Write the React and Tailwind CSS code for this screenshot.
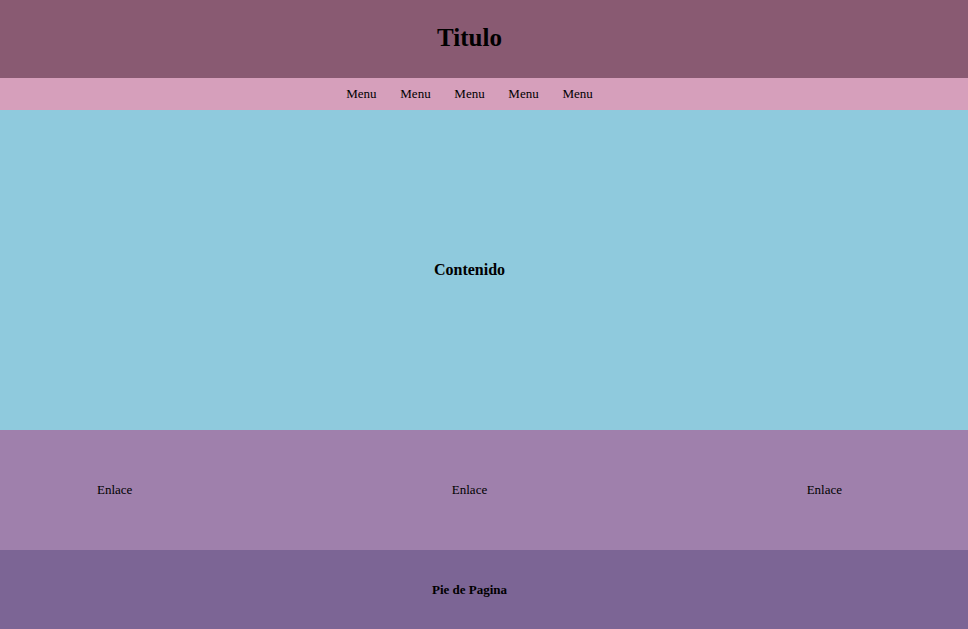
export default function App() {
  const menus = ["Menu", "Menu", "Menu", "Menu", "Menu"];

  return (
    <div className="flex h-[629px] flex-col font-['Liberation_Serif',serif] text-black">
      {/* HEADER */}
      <header className="flex h-[78px] items-center bg-[#895a72] pr-[29px] pb-[2px]">
        <h1 className="w-full text-center text-[25px] font-bold">Titulo</h1>
      </header>

      {/* NAV */}
      <nav className="flex h-[32px] items-center justify-center gap-[23.7px] bg-[#d69fbb] pr-[29px] text-[13px]">
        {menus.map((m, i) => (
          <span key={i}>{m}</span>
        ))}
      </nav>

      {/* CONTENT */}
      <main className="flex h-[320px] items-center justify-center bg-[#8fcadd] pr-[29px]">
        <h3 className="text-[16px] font-bold">Contenido</h3>
      </main>

      {/* LINKS */}
      <section className="flex h-[120px] items-center justify-between bg-[#9f80ac] pl-[97px] pr-[126px] text-[13px]">
        <span>Enlace</span>
        <span>Enlace</span>
        <span>Enlace</span>
      </section>

      {/* FOOTER */}
      <footer className="flex flex-1 items-center justify-center bg-[#7c6595] pr-[29px]">
        <h5 className="text-[13px] font-bold">Pie de Pagina</h5>
      </footer>
    </div>
  );
}
